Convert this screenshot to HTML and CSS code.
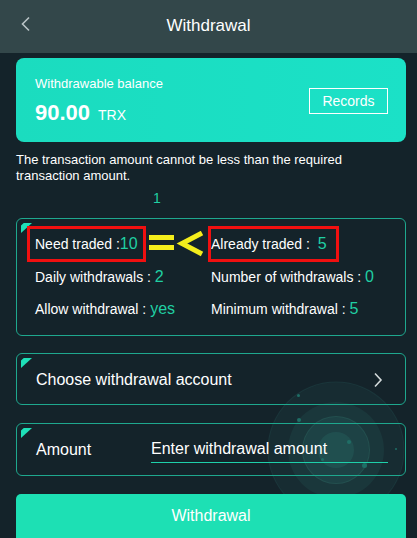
FILE: index.html
```html
<!DOCTYPE html>
<html>
<head>
<meta charset="utf-8">
<link rel="stylesheet" href="styles.css">
</head>
<body>
<div class="page">
  <header class="topbar">
    <svg class="back" width="12" height="16" viewBox="0 0 12 16"><path d="M9 1.5 L2.5 8 L9 14.5" fill="none" stroke="#b9c4c6" stroke-width="1.6"/></svg>
    <h1 class="title">Withdrawal</h1>
  </header>

  <div class="deco">
    <div class="ring r4"></div>
    <div class="ring r3"></div>
    <div class="ring r2"></div>
    <div class="ring r1"></div>
    <span class="dot d1"></span><span class="dot d2"></span><span class="dot d3"></span><span class="dot d4"></span><span class="dot d5"></span><span class="dot d6"></span>
  </div>

  <main class="content">
    <section class="balance">
      <div class="balance-info">
        <div class="balance-label">Withdrawable balance</div>
        <div class="balance-amount"><span class="big">90.00</span><span class="unit">TRX</span></div>
      </div>
      <button class="records">Records</button>
    </section>

    <p class="notice">The transaction amount cannot be less than the required transaction amount.</p>
    <div class="one">1</div>

    <section class="info box">
      <span class="corner"></span>
      <div class="grid">
        <div class="cell">Need traded :<span class="val">10</span></div>
        <div class="cell">Already traded :&nbsp; <span class="val">5</span></div>
        <div class="cell">Daily withdrawals : <span class="val">2</span></div>
        <div class="cell">Number of withdrawals : <span class="val">0</span></div>
        <div class="cell">Allow withdrawal : <span class="val">yes</span></div>
        <div class="cell">Minimum withdrawal : <span class="val">5</span></div>
      </div>
      <span class="mark mark-a"></span>
      <span class="mark mark-b"></span>
      <svg class="cmp" width="56" height="28" viewBox="0 0 56 28"><rect x="1" y="4" width="25" height="5" fill="#f4ee1c"/><rect x="1" y="14" width="25" height="5" fill="#f4ee1c"/><path d="M54 2 L34 12.5 L54 23" fill="none" stroke="#f4ee1c" stroke-width="5"/></svg>
    </section>

    <section class="choose box">
      <span class="corner"></span>
      <span class="choose-text">Choose withdrawal account</span>
      <svg class="chev" width="10" height="16" viewBox="0 0 10 16"><path d="M2 1.5 L8 8 L2 14.5" fill="none" stroke="#d3dadb" stroke-width="1.6"/></svg>
    </section>

    <section class="amount box">
      <span class="corner"></span>
      <span class="amount-label">Amount</span>
      <div class="amount-input">Enter withdrawal amount</div>
    </section>

    <button class="submit">Withdrawal</button>
  </main>
</div>
</body>
</html>
```

FILE: styles.css
```css
html, body {
  margin: 0;
  padding: 0;
}
body {
  background: #14232a;
  font-family: "Liberation Sans", Arial, sans-serif;
  color: #ffffff;
  width: 417px;
  height: 538px;
  overflow: hidden;
}
.page {
  position: relative;
  min-height: 538px;
}
.topbar {
  height: 53px;
  background: #33474a;
  display: flex;
  align-items: center;
  justify-content: center;
  position: relative;
}
.back {
  position: absolute;
  left: 20px;
  top: 16px;
}
.title {
  margin: 0;
  font-size: 17px;
  font-weight: normal;
  color: #ffffff;
  transform: translateY(-1px);
}
.content {
  position: relative;
  padding: 5px 11px 0 16px;
  display: flex;
  flex-direction: column;
}
.balance {
  height: 84px;
  border-radius: 8px;
  background: linear-gradient(90deg, #1bdcbf, #1be1c7);
  display: flex;
  align-items: center;
  justify-content: space-between;
  padding: 0 18px 0 19px;
}
.balance-label {
  font-size: 13px;
  margin-top: 1px;
}
.balance-amount {
  display: flex;
  align-items: baseline;
  margin-top: 9px;
}
.big {
  font-size: 22px;
  font-weight: bold;
}
.unit {
  font-size: 14px;
  margin-left: 8px;
}
.records {
  background: transparent;
  border: 1px solid #ffffff;
  color: #ffffff;
  font-family: inherit;
  font-size: 14px;
  width: 79px;
  height: 26px;
  padding: 0;
  margin-top: 1px;
}
.notice {
  margin: 10px 0 0 0;
  font-size: 13px;
  line-height: 16px;
  padding-right: 20px;
}
.one {
  font-size: 14px;
  color: #20cfa3;
  line-height: 16px;
  margin-top: 6px;
  padding-left: 137px;
}
.box {
  position: relative;
  border: 1px solid #1ea88e;
  border-radius: 6px;
}
.corner {
  position: absolute;
  left: 4px;
  top: 4px;
  width: 11px;
  height: 10px;
  background: #1ee0b8;
  clip-path: polygon(0 100%, 0 25%, 25% 0, 100% 0);
  border-top-left-radius: 2px;
}
.info {
  margin-top: 12px;
  height: 118px;
  padding: 9px 0 0 18px;
  box-sizing: border-box;
}
.grid {
  display: grid;
  grid-template-columns: 176px 1fr;
  grid-auto-rows: 32.5px;
  font-size: 14px;
  align-items: center;
}
.val {
  color: #20cfa3;
  font-size: 16px;
}
.mark {
  position: absolute;
  border: 3px solid #f01010;
  box-sizing: border-box;
  height: 36px;
  top: 7px;
}
.mark-a {
  left: 10px;
  width: 119px;
}
.mark-b {
  left: 191px;
  width: 131px;
}
.cmp {
  position: absolute;
  left: 131px;
  top: 12px;
}
.choose {
  margin-top: 17px;
  height: 52px;
  box-sizing: border-box;
  display: flex;
  align-items: center;
  justify-content: space-between;
  padding: 0 22px 0 19px;
}
.choose-text {
  font-size: 16px;
  margin-top: 1px;
}
.chev {
  margin-top: 1px;
}
.amount {
  margin-top: 18px;
  height: 53px;
  box-sizing: border-box;
  display: flex;
  align-items: center;
  padding: 0 17px 0 19px;
}
.amount-label {
  font-size: 16px;
  width: 115px;
}
.amount-input {
  flex: 1;
  font-size: 16px;
  border-bottom: 1px solid #1ed0aa;
  padding-bottom: 4px;
  margin-top: 4px;
}
.submit {
  margin-top: 18px;
  height: 48px;
  border: none;
  border-radius: 5px;
  background: #1de0b4;
  color: #ffffff;
  font-family: inherit;
  font-size: 16px;
  padding: 0 0 4px 0;
}
.deco {
  position: absolute;
  left: 336px;
  top: 450px;
  width: 0;
  height: 0;
}
.ring {
  position: absolute;
  border-radius: 50%;
  transform: translate(-50%, -50%);
}
.r4 { width: 135px; height: 135px; background: rgba(40, 90, 88, 0.18); border: 1px solid rgba(50, 110, 105, 0.15); }
.r3 { width: 96px; height: 96px; background: rgba(40, 100, 96, 0.2); }
.r2 { width: 66px; height: 66px; background: rgba(40, 110, 104, 0.22); border: 1px solid rgba(60, 130, 120, 0.2); }
.r1 { width: 36px; height: 36px; background: rgba(45, 120, 112, 0.25); }
.dot {
  position: absolute;
  border-radius: 50%;
  background: #1f6e66;
}
.d1 { left: -39px; top: -56px; width: 3px; height: 3px; }
.d2 { left: -39px; top: -32px; width: 4px; height: 4px; }
.d3 { left: 11px; top: -10px; width: 4px; height: 4px; }
.d4 { left: -15px; top: 8px; width: 3px; height: 3px; }
.d5 { left: 26px; top: 13px; width: 5px; height: 5px; }
.d6 { left: 59px; top: -2px; width: 2px; height: 2px; }
```
